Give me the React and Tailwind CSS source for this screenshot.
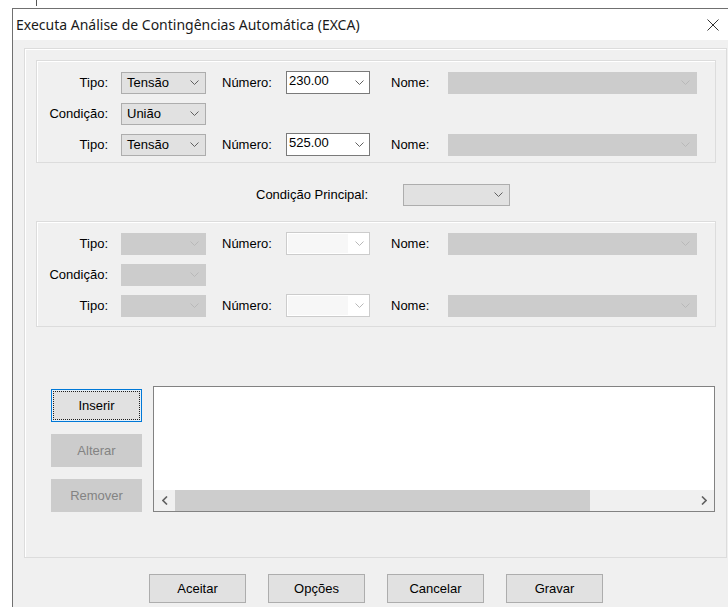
import React from 'react';

const sans = { fontFamily: '"Liberation Sans", Arial, sans-serif' };

// small "v" chevron used by every combo box
const Chevron = ({ disabled }) => (
    <svg width="9" height="5" viewBox="0 0 9 5" className="shrink-0">
        <polyline
            points="0.5,0.5 4.5,4.5 8.5,0.5"
            fill="none"
            stroke={disabled ? '#b8b8b8' : '#606060'}
            strokeWidth="1"
        />
    </svg>
);

// dropdown list style combo (Tipo / Condição / Nome)
const Dropdown = ({ value, width, disabled }) => (
    <div
        className={`flex h-[22px] items-center justify-between pl-[5px] pr-[6px] border ${
            disabled ? 'bg-[#cccccc] border-[#cccccc]' : 'bg-[#e1e1e1] border-[#adadad]'
        }`}
        style={{ width }}
    >
        <span className="text-[13px] text-black">{value}</span>
        <Chevron disabled={disabled} />
    </div>
);

// editable combo (Número)
const Combo = ({ value, disabled }) => (
    <div
        className={`flex h-[23px] w-[84px] border ${
            disabled ? 'border-[#cccccc] bg-white' : 'border-[#7a7a7a] bg-white'
        }`}
    >
        <div className={`flex-1 pl-[2px] pt-[1px] text-[13px] leading-[16px] ${disabled ? 'bg-[#f7f7f7] m-[1px]' : ''}`}>
            {value}
        </div>
        <div className="flex w-[20px] items-center justify-center">
            <Chevron disabled={disabled} />
        </div>
    </div>
);

const Label = ({ children, className }) => (
    <span className={`text-[13px] ${className}`}>{children}</span>
);

const TipoRow = ({ tipo, numero, disabled }) => (
    <div className="flex h-[23px] items-center">
        <Label className="w-[71px] text-right">Tipo:</Label>
        <div className="ml-[13px]">
            <Dropdown value={tipo} width={85} disabled={disabled} />
        </div>
        <Label className="ml-[16px] w-[64px]">Número:</Label>
        <Combo value={numero} disabled={disabled} />
        <Label className="ml-[21px] w-[57px]">Nome:</Label>
        <Dropdown value="" width={249} disabled />
    </div>
);

const CondRow = ({ value, disabled }) => (
    <div className="flex h-[23px] items-center">
        <Label className="w-[71px] text-right">Condição:</Label>
        <div className="ml-[13px]">
            <Dropdown value={value} width={85} disabled={disabled} />
        </div>
    </div>
);

const GroupBox = ({ children, className }) => (
    <div className={`border border-[#dcdcdc] shadow-[inset_1px_1px_0_#ffffff] ${className}`}>{children}</div>
);

const SideButton = ({ children, focused, disabled }) => (
    <div
        className={`flex h-[33px] w-[91px] items-center justify-center text-[13px] ${
            focused
                ? 'border border-[#0078d7] bg-[#e5f1fb] p-[1px]'
                : disabled
                ? 'bg-[#cccccc] border border-[#cccccc] text-[#838383]'
                : 'bg-[#e1e1e1] border border-[#adadad]'
        }`}
    >
        {focused ? (
            <div className="flex h-full w-full items-center justify-center border border-dotted border-[#1e1e1e] bg-[#e1e1e1]">
                {children}
            </div>
        ) : (
            children
        )}
    </div>
);

const FooterButton = ({ children }) => (
    <div className="flex h-[29px] w-[97px] items-center justify-center border border-[#adadad] bg-[#e1e1e1] text-[13px]">
        {children}
    </div>
);

export default function App() {
    return (
        <div className="relative h-[607px] w-[728px] overflow-hidden bg-white pl-[12px] pt-[8px]" style={sans}>
            <div className="h-[6px] w-px bg-[#555] absolute left-[36px] top-0" />
            <div className="flex h-full flex-col border-l border-t border-[#707070]">
                {/* title bar */}
                <div className="flex h-[31px] shrink-0 items-center justify-between bg-white pl-[3px] pr-[9px]">
                    <span
                        className="text-[14px] text-[#1a1a1a]"
                        style={{ fontFamily: '"Noto Sans", "Open Sans", sans-serif' }}
                    >
                        Executa Análise de Contingências Automática (EXCA)
                    </span>
                    <svg width="12" height="12" viewBox="0 0 12 12">
                        <path d="M0.5 0.5 L11.5 11.5 M11.5 0.5 L0.5 11.5" stroke="#333" strokeWidth="1" />
                    </svg>
                </div>

                {/* dialog body */}
                <div className="flex flex-1 flex-col bg-[#f0f0f0] pl-[11px] pt-[8px]">
                    <GroupBox className="flex h-[510px] w-[703px] flex-col px-[11px] pt-[11px]">
                        {/* first condition */}
                        <GroupBox className="flex h-[103px] w-[680px] flex-col gap-[8px] pt-[10px]">
                            <TipoRow tipo="Tensão" numero="230.00" />
                            <CondRow value="União" />
                            <TipoRow tipo="Tensão" numero="525.00" />
                        </GroupBox>

                        <div className="mt-[20px] flex h-[23px] items-center">
                            <Label className="ml-[220px] w-[136px]">Condição Principal:</Label>
                            <div className="ml-[11px]">
                                <Dropdown value="" width={107} />
                            </div>
                        </div>

                        {/* second condition */}
                        <GroupBox className="mt-[15px] flex h-[106px] w-[680px] flex-col gap-[8px] pt-[10px]">
                            <TipoRow tipo="" numero="" disabled />
                            <CondRow value="" disabled />
                            <TipoRow tipo="" numero="" disabled />
                        </GroupBox>

                        {/* contingency list */}
                        <div className="mt-[59px] flex">
                            <div className="ml-[15px] mt-[3px] flex flex-col gap-[12px]">
                                <SideButton focused>Inserir</SideButton>
                                <SideButton disabled>Alterar</SideButton>
                                <SideButton disabled>Remover</SideButton>
                            </div>
                            <div className="ml-[11px] flex h-[126px] w-[564px] flex-col border border-[#828282] bg-white">
                                <div className="flex-1" />
                                <div className="flex h-[21px] items-center bg-[#f0f0f0]">
                                    <div className="flex w-[21px] items-center justify-center">
                                        <svg width="6" height="9" viewBox="0 0 6 9">
                                            <polyline points="5,0.5 1,4.5 5,8.5" fill="none" stroke="#606060" strokeWidth="1.6" />
                                        </svg>
                                    </div>
                                    <div className="h-full w-[415px] bg-[#cdcdcd]" />
                                    <div className="flex-1" />
                                    <div className="flex w-[21px] items-center justify-center">
                                        <svg width="6" height="9" viewBox="0 0 6 9">
                                            <polyline points="1,0.5 5,4.5 1,8.5" fill="none" stroke="#606060" strokeWidth="1.6" />
                                        </svg>
                                    </div>
                                </div>
                            </div>
                        </div>
                    </GroupBox>

                    {/* footer buttons */}
                    <div className="mt-[16px] flex gap-[22px] pl-[125px]">
                        <FooterButton>Aceitar</FooterButton>
                        <FooterButton>Opções</FooterButton>
                        <FooterButton>Cancelar</FooterButton>
                        <FooterButton>Gravar</FooterButton>
                    </div>
                </div>
            </div>
        </div>
    );
}
